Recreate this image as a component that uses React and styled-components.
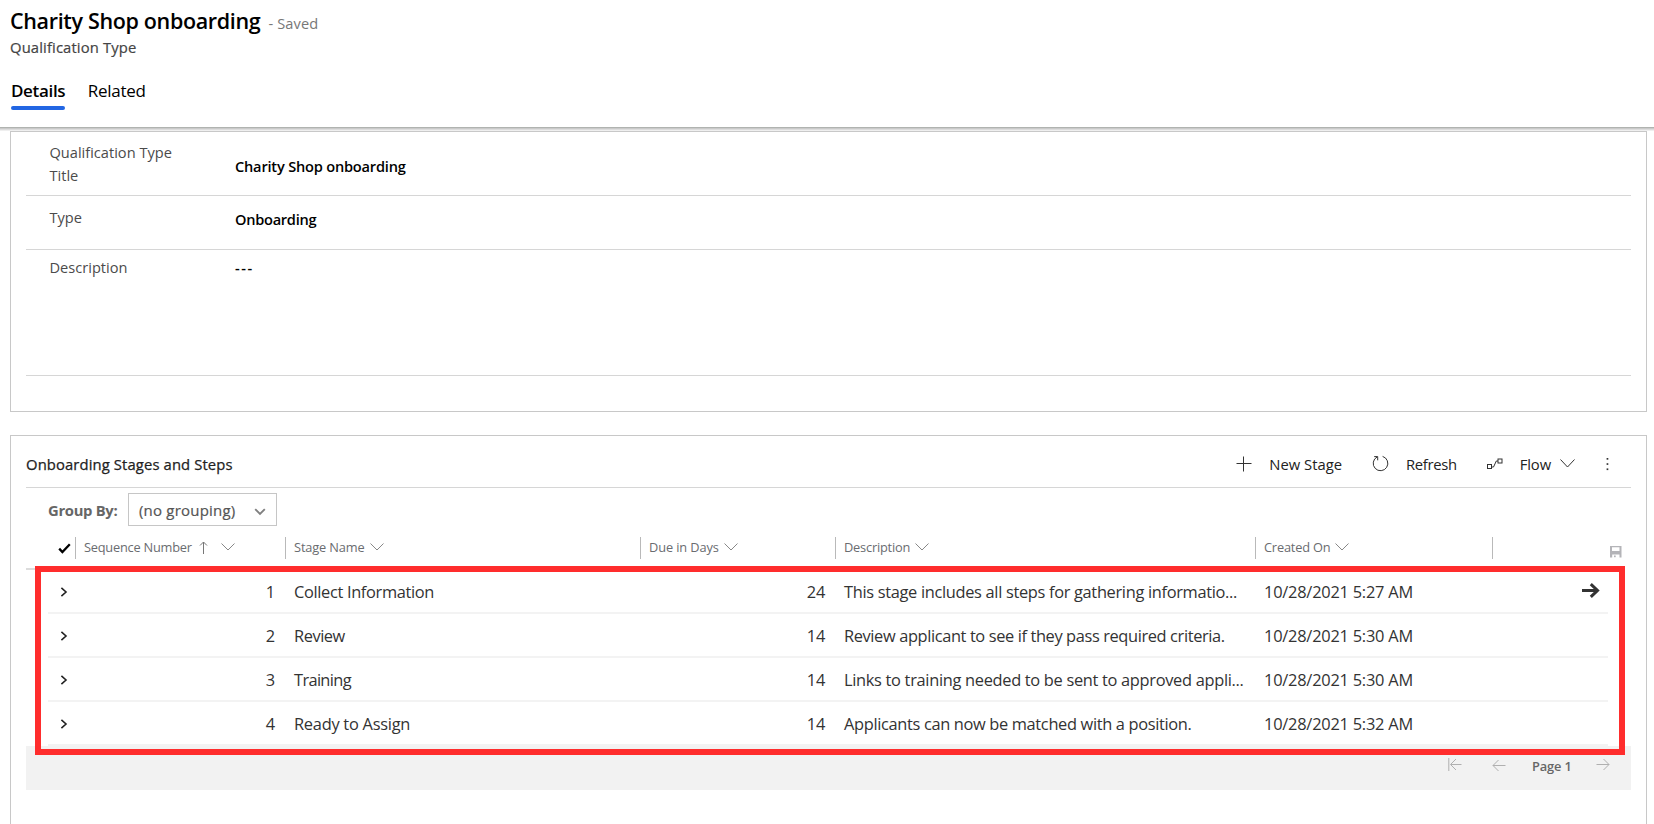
import React from 'react';
import styled, { createGlobalStyle } from 'styled-components';

const GlobalStyle = createGlobalStyle`
  *, *::before, *::after { box-sizing: border-box; }
  body {
    margin: 0;
    background: #fff;
    font-family: "Open Sans", "Noto Sans", sans-serif;
    overflow: hidden;
  }
  svg { flex: none; }
`;

const Page = styled.div`
  height: 824px;
  display: flex;
  flex-direction: column;
  overflow: hidden;
  white-space: nowrap;
`;

const Text = styled.span`
  letter-spacing: ${(p) => p.$track || 0}px;
`;

const Header = styled.header`
  height: 127px;
  flex: none;
  padding: 7px 10px 0;
`;

const TitleLine = styled.div`
  display: flex;
  align-items: baseline;
  gap: 8px;
  height: 28px;
  line-height: 28px;
`;

const Title = styled.h1`
  margin: 0;
  font-size: 21.5px;
  font-weight: 600;
  color: #000;
  letter-spacing: -0.34px;
`;

const SavedState = styled.span`
  font-size: 14.6px;
  color: #777;
  letter-spacing: 0.15px;
`;

const EntityName = styled.div`
  height: 20px;
  line-height: 20px;
  margin-top: 2px;
  font-size: 14.8px;
  color: #444;
  -webkit-text-stroke: 0.2px #444;
  letter-spacing: 0.13px;
`;

const Tabs = styled.nav`
  display: flex;
  gap: 22.5px;
  margin: 19px 0 0 1px;
`;

const Tab = styled.span`
  height: 34px;
  line-height: 29px;
  font-size: 17px;
  font-weight: ${(p) => (p.$active ? 600 : 400)};
  color: #000;
  letter-spacing: ${(p) => (p.$active ? -0.34 : -0.27)}px;
  display: flex;
  flex-direction: column;
  justify-content: space-between;

  &::after {
    content: "";
    height: 4px;
    border-radius: 2px;
    background: ${(p) => (p.$active ? '#2266e3' : 'transparent')};
  }
`;

const HeaderShade = styled.div`
  flex: none;
  height: 4px;
  background: linear-gradient(
    #b0b3b0 0 1px,
    #cacaca 1px 2px,
    #dcdcdc 2px 3px,
    #efefef 3px 4px
  );
`;

const Card = styled.section`
  flex: none;
  margin: 0 7px 23px 10px;
  border: 1px solid #c8c8c8;
  padding: 0 15px;
  height: ${(p) => p.$height}px;
`;

const Field = styled.div`
  display: flex;
  align-items: ${(p) => (p.$top ? 'flex-start' : 'center')};
  height: ${(p) => p.$height}px;
  padding: ${(p) => p.$pad};
  border-bottom: 1px solid #d6d6d6;
`;

const FieldLabel = styled.div`
  width: 185.5px;
  margin-left: 23.5px;
  font-size: 14.6px;
  line-height: 23px;
  color: #4b4b4b;
`;

const FieldValue = styled.div`
  font-size: 14.6px;
  line-height: 23px;
  font-weight: 600;
  color: #000;
  padding-top: ${(p) => p.$drop || 0}px;
`;

const GridTop = styled.div`
  height: 52px;
  display: flex;
  align-items: center;
  justify-content: space-between;
  border-bottom: 1px solid #d6d6d6;
  padding-top: 4px;
`;

const GridTitle = styled.h2`
  margin: 0;
  font-size: 14.8px;
  font-weight: 400;
  color: #222;
  -webkit-text-stroke: 0.25px #222;
  letter-spacing: 0.12px;
`;

const Commands = styled.div`
  display: flex;
  align-items: center;
  margin-right: 22px;
`;

const Command = styled.div`
  display: flex;
  align-items: center;
  font-size: 14.8px;
  line-height: 20px;
  color: #222;
  gap: ${(p) => p.$gap}px;
  margin-right: ${(p) => p.$after}px;
`;

const FlowChevron = styled.span`
  margin-left: -8px;
  line-height: 0;
`;

const GroupRow = styled.div`
  height: 49px;
  display: flex;
  align-items: flex-start;
  padding: 5px 0 0 22px;
`;

const GroupLabel = styled.label`
  width: 80px;
  line-height: 34px;
  font-size: 14.8px;
  font-weight: 700;
  color: #666;
  letter-spacing: -0.3px;
`;

const Select = styled.div`
  width: 149px;
  height: 33px;
  border: 1px solid #c6c6c6;
  display: flex;
  align-items: center;
  justify-content: space-between;
  padding: 0 10px 0 10px;
  font-size: 15px;
  color: #555;
  -webkit-text-stroke: 0.2px #555;
  letter-spacing: 0.2px;

  svg { margin-top: 5px; }
`;

const columns = '27px 210px 355px 195px 420px 237px 1fr';

const HeadRow = styled.div`
  display: grid;
  grid-template-columns: ${columns};
  height: 33px;
  margin-right: 23px;
  padding-left: 22px;
  border-bottom: 2px solid #dcdcdc;
`;

const HeadCell = styled.div`
  height: 22px;
  display: flex;
  align-items: center;
  gap: ${(p) => p.$gap || 5}px;
  padding: 0 0 2px 8px;
  border-left: 1px solid #b9b9b9;
  font-size: 12.8px;
  line-height: 20px;
  color: #6a6c70;
`;

const CheckCell = styled.div`
  padding: 6px 0 0 10px;
  line-height: 0;
`;

const SortChevron = styled.span`
  margin-left: 5px;
  line-height: 0;
`;

const LastCell = styled.div`
  height: 22px;
  padding: 9px 0 0 117px;
  border-left: 1px solid #b9b9b9;
  line-height: 0;
`;

const Rows = styled.div`
  position: relative;
  padding: 0 23px 0 22px;
`;

const Row = styled.div`
  display: grid;
  grid-template-columns: ${columns};
  align-items: center;
  height: 44px;
  border-bottom: 2px solid #f3f3f3;
  font-size: 16.4px;
  line-height: 24px;
  color: #333;
`;

const Cell = styled.div`
  display: flex;
  align-items: center;
  justify-content: ${(p) => (p.$right ? 'flex-end' : 'flex-start')};
  padding: ${(p) => p.$top ?? 1}px ${(p) => p.$end ?? 10}px 0 ${(p) => p.$left ?? 9}px;
`;

const OpenCell = styled.div`
  padding-left: 90px;
  margin-top: -2px;
  line-height: 0;
`;

const Highlight = styled.div`
  position: absolute;
  top: -4px;
  left: 9px;
  width: 1590px;
  height: 189px;
  border: 6px solid #ff2d2d;
  pointer-events: none;
`;

const Pager = styled.footer`
  height: 44px;
  background: #f2f2f2;
  display: flex;
  justify-content: flex-end;
  align-items: flex-start;
  padding: 10px 21px 0 0;
  font-size: 12.8px;
  font-weight: 600;
  line-height: 20px;
  color: #666;
`;

const PagerSlot = styled.span`
  padding-top: ${(p) => p.$drop}px;
  margin-left: ${(p) => p.$before || 0}px;
  line-height: 0;
`;

const PagerText = styled.span`
  width: 39px;
  margin: 0 25px 0 26px;
  letter-spacing: -0.1px;
`;

const Svg = ({ w, h, color = '#333', sw = 1, children }) => (
  <svg width={w} height={h} viewBox={`0 0 ${w} ${h}`} fill="none" stroke={color} strokeWidth={sw}>
    {children}
  </svg>
);

const ChevronDown = ({ w = 14, h = 8, color = '#888', sw = 1 }) => (
  <Svg w={w} h={h} color={color} sw={sw}>
    <path d={`M.5 .5L${w / 2} ${h - 1}L${w - 0.5} .5`} />
  </Svg>
);

const SelectChevron = () => (
  <Svg w={12} h={8} color="#808080" sw={1.9}><path d="M1.2 1.2L6 6L10.8 1.2" /></Svg>
);

const PlusIcon = () => (
  <Svg w={16} h={16}><path d="M7.5 .5v15M.5 7.5h15" /></Svg>
);

const RefreshIcon = () => (
  <Svg w={17} h={17}>
    <path d="M10.6 1.4A7.3 7.3 0 1 1 5.2 1.9" />
    <path d="M2.2 1.6H5.7V5.3" />
  </Svg>
);

const FlowIcon = () => (
  <Svg w={16} h={12}>
    <rect x=".5" y="6.5" width="4" height="4" />
    <rect x="11" y="1" width="4" height="4" />
    <path d="M4.5 9H6.5L9.3 3H11" />
  </Svg>
);

const MoreIcon = () => (
  <svg width="3" height="14" viewBox="0 0 3 14" fill="#333">
    <rect x=".6" y="1" width="1.7" height="1.7" />
    <rect x=".6" y="6.2" width="1.7" height="1.7" />
    <rect x=".6" y="11.4" width="1.7" height="1.7" />
  </svg>
);

const CheckIcon = () => (
  <Svg w={13} h={11} color="#000" sw={2.3}><path d="M1.2 5.6L4.4 9L11.8 1.2" /></Svg>
);

const SortUpIcon = () => (
  <Svg w={9} h={13} color="#777"><path d="M4.5 13V1M1 4.5L4.5 1L8 4.5" /></Svg>
);

const SaveIcon = () => (
  <svg width="12" height="12" viewBox="0 0 12 12">
    <path fill="#b4b4b8" fillRule="evenodd" d="M0 0H11.5V11.5H9.5V8.5H2.2V11.5H0ZM2 1.2V5H9.5V1.2Z" />
    <rect x="4" y="9.5" width="1.7" height="1.7" fill="#b4b4b8" />
  </svg>
);

const ExpandIcon = () => (
  <Svg w={8} h={10} color="#222" sw={1.6}><path d="M1.4 .9L6 5L1.4 9.1" /></Svg>
);

const OpenIcon = () => (
  <Svg w={18} h={15} color="#333" sw={3}><path d="M0 7.5H15M8.8 1.2L15.5 7.5L8.8 13.8" /></Svg>
);

const PagerArrow = ({ kind }) => (
  <Svg w={14} h={13} color="#b0b0b0">
    {kind === 'next' && <path d="M.5 6.5H13M7.5 1L13 6.5L7.5 12" />}
    {kind === 'prev' && <path d="M13.5 6.5H1M6.5 1L1 6.5L6.5 12" />}
    {kind === 'first' && <path d="M.8 0V13M13.5 6.5H3M8 1L2.5 6.5L8 12" />}
  </Svg>
);

const stages = [
  { n: 1, name: 'Collect Information', nt: -0.34, due: 24, desc: 'This stage includes all steps for gathering informatio...', dt: -0.32, date: '10/28/2021 5:27 AM' },
  { n: 2, name: 'Review', nt: -0.45, due: 14, desc: 'Review applicant to see if they pass required criteria.', dt: -0.38, date: '10/28/2021 5:30 AM' },
  { n: 3, name: 'Training', nt: -0.65, due: 14, desc: 'Links to training needed to be sent to approved appli...', dt: -0.31, date: '10/28/2021 5:30 AM' },
  { n: 4, name: 'Ready to Assign', nt: -0.26, due: 14, desc: 'Applicants can now be matched with a position.', dt: -0.34, date: '10/28/2021 5:32 AM' },
];

export default function App() {
  return (
    <Page>
      <GlobalStyle />
      <Header>
        <TitleLine>
          <Title>Charity Shop onboarding</Title>
          <SavedState>- Saved</SavedState>
        </TitleLine>
        <EntityName>Qualification Type</EntityName>
        <Tabs>
          <Tab $active>Details</Tab>
          <Tab>Related</Tab>
        </Tabs>
      </Header>
      <HeaderShade />

      <Card $height={281}>
        <Field $height={64} $pad="0">
          <FieldLabel>Qualification Type<br />Title</FieldLabel>
          <FieldValue $drop={6}><Text $track={-0.2}>Charity Shop onboarding</Text></FieldValue>
        </Field>
        <Field $height={54} $pad="0 0 10px">
          <FieldLabel>Type</FieldLabel>
          <FieldValue $drop={4}><Text $track={-0.28}>Onboarding</Text></FieldValue>
        </Field>
        <Field $height={126} $pad="6px 0 0" $top>
          <FieldLabel>Description</FieldLabel>
          <FieldValue><Text $track={1.6}>---</Text></FieldValue>
        </Field>
      </Card>

      <Card $height={500}>
        <GridTop>
          <GridTitle>Onboarding Stages and Steps</GridTitle>
          <Commands>
            <Command $gap={17} $after={30}>
              <PlusIcon />New Stage
            </Command>
            <Command $gap={17} $after={30}>
              <RefreshIcon /><Text $track={-0.32}>Refresh</Text>
            </Command>
            <Command $gap={17} $after={31}>
              <FlowIcon /><Text $track={-0.1}>Flow</Text>
              <FlowChevron><ChevronDown w={15} h={9} color="#333" /></FlowChevron>
            </Command>
            <MoreIcon />
          </Commands>
        </GridTop>
        <GroupRow>
          <GroupLabel>Group By:</GroupLabel>
          <Select>(no grouping)<SelectChevron /></Select>
        </GroupRow>
        <HeadRow>
          <CheckCell><CheckIcon /></CheckCell>
          <HeadCell $gap={7.5}>
            <Text $track={-0.22}>Sequence Number</Text>
            <SortUpIcon />
            <SortChevron><ChevronDown /></SortChevron>
          </HeadCell>
          <HeadCell><Text $track={-0.14}>Stage Name</Text><ChevronDown /></HeadCell>
          <HeadCell><Text $track={-0.11}>Due in Days</Text><ChevronDown /></HeadCell>
          <HeadCell><Text $track={-0.2}>Description</Text><ChevronDown /></HeadCell>
          <HeadCell><Text $track={-0.2}>Created On</Text><ChevronDown /></HeadCell>
          <LastCell><SaveIcon /></LastCell>
        </HeadRow>
        <Rows>
          {stages.map((s) => (
            <Row key={s.n}>
              <Cell $left={12} $end={0} $top={2}><ExpandIcon /></Cell>
              <Cell $right>{s.n}</Cell>
              <Cell><Text $track={s.nt}>{s.name}</Text></Cell>
              <Cell $right><Text $track={-0.3}>{s.due}</Text></Cell>
              <Cell><Text $track={s.dt}>{s.desc}</Text></Cell>
              <Cell><Text $track={-0.23}>{s.date}</Text></Cell>
              <OpenCell>{s.n === 1 && <OpenIcon />}</OpenCell>
            </Row>
          ))}
          <Highlight />
        </Rows>
        <Pager>
          <PagerSlot $drop={2}><PagerArrow kind="first" /></PagerSlot>
          <PagerSlot $drop={3} $before={30}><PagerArrow kind="prev" /></PagerSlot>
          <PagerText>Page 1</PagerText>
          <PagerSlot $drop={2}><PagerArrow kind="next" /></PagerSlot>
        </Pager>
      </Card>
    </Page>
  );
}
